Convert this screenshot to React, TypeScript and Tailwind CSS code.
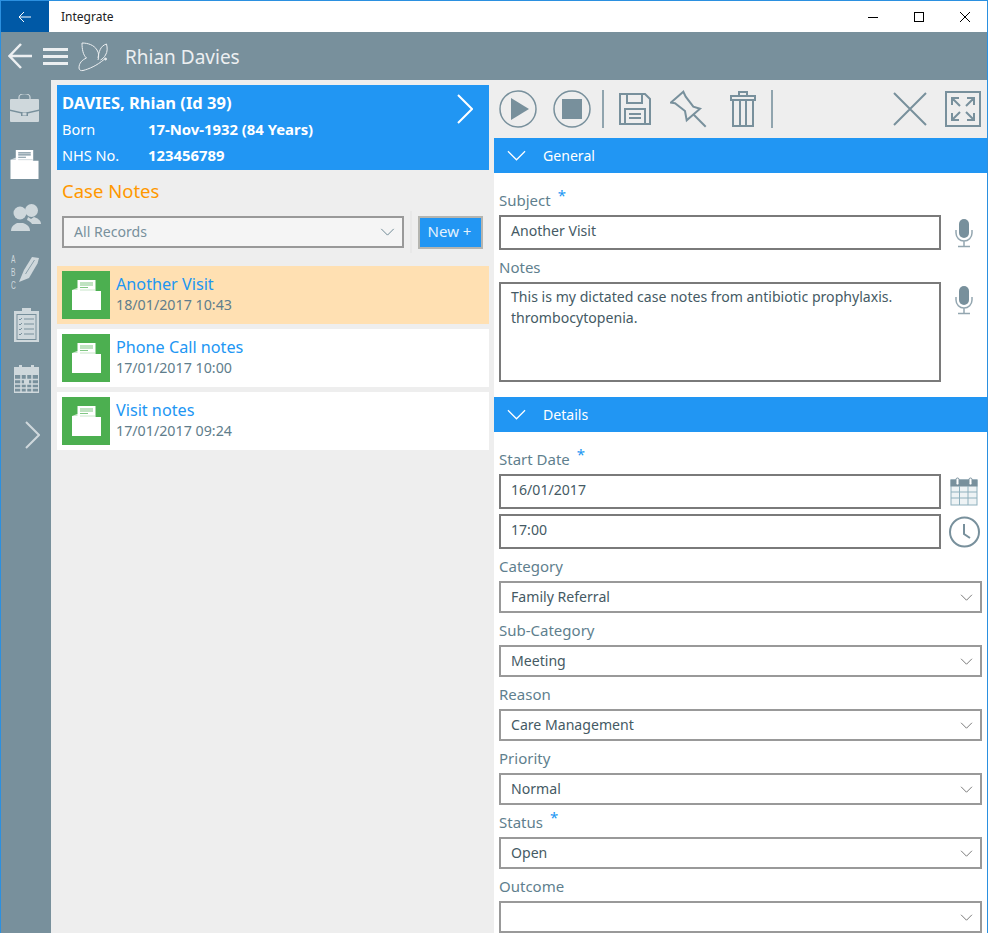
import type { ReactNode } from 'react'

const slate = '#78909c'

function Chevron({ className = '' }: { className?: string }) {
  return (
    <svg viewBox="0 0 16 9" className={className} fill="none" stroke="currentColor" strokeWidth="1">
      <path d="M1 1l7 7 7-7" />
    </svg>
  )
}

function FolderIcon({ className = '', lines = '#81c784', back = '#c8e6c9' }: { className?: string; lines?: string; back?: string }) {
  return (
    <svg viewBox="0 0 29 30" className={className}>
      <path d="M0 10l5-2h2V6h3v4z" fill={back} />
      <rect x="5.500" y="0" width="18" height="11" fill="#fff" />
      <path d="M8 3h13M8 5h13M8 7.500h8" stroke={lines} strokeWidth="1.200" />
      <path d="M0 10h8l2-1.500h13V11h6v19H0z" fill="#fff" />
      <path d="M8 10h15" stroke={back} strokeWidth="1" />
    </svg>
  )
}

function Mic() {
  return (
    <svg viewBox="0 0 18 30" className="h-[30px] w-[18px]" fill="none">
      <rect x="4" y="1" width="10" height="19" rx="5" fill={slate} />
      <path d="M1 12v3a8 8 0 0 0 16 0v-3M9 23v5M3 28.500h12" stroke={slate} strokeWidth="1.500" opacity="0.8" />
    </svg>
  )
}

function Label({ children, required }: { children: ReactNode; required?: boolean }) {
  return (
    <div className="flex h-[32px] items-end pb-[5px] text-[15px] leading-5 text-[#5f7f8e]">
      {children}
      {required && <span className="mb-[7px] ml-[7px] text-[15px] leading-none text-[#2196f3]">*</span>}
    </div>
  )
}

function TextBox({ value, className = 'pt-[4px] leading-[19px]' }: { value: string; className?: string }) {
  return (
    <div className={`w-[442px] border-2 border-[#7a7a7a] bg-white px-[10px] text-[14.100px] text-[#455a64] ${className}`}>
      {value}
    </div>
  )
}

function Select({ label, value, required }: { label: string; value: string; required?: boolean }) {
  return (
    <div>
      <Label required={required}>{label}</Label>
      <div className="flex h-[32px] items-center justify-between border-2 border-[#999] bg-white pr-[7px] pl-[10px] text-[14.100px] text-[#455a64]">
        <span>{value}</span>
        <Chevron className="h-[7px] w-[13px] text-[#555]" />
      </div>
    </div>
  )
}

function SectionHeader({ title }: { title: string }) {
  return (
    <div className="flex h-[35px] items-center bg-[#2196f3] pl-[12px] text-[14.100px] text-white">
      <Chevron className="h-[11px] w-[21px]" />
      <span className="ml-[16px]">{title}</span>
    </div>
  )
}

function NoteRow({ title, date, active }: { title: string; date: string; active?: boolean }) {
  return (
    <div className={`flex h-[58px] items-center pl-[5px] ${active ? 'bg-[#ffe0b2]' : 'bg-white'}`}>
      <div className="flex h-[48px] w-[48px] items-center justify-center bg-[#4caf50]">
        <FolderIcon className="h-[30px] w-[29px]" />
      </div>
      <div className="mb-[2px] ml-[6px]">
        <div className="text-[16.200px] leading-[21px] text-[#2196f3]">{title}</div>
        <div className="text-[14.250px] leading-[20px] text-[#607d8b]">{date}</div>
      </div>
    </div>
  )
}

function Sidebar() {
  const c = '#cfd8dc'
  const letter = { fontSize: 11, fontFamily: 'Liberation Sans, sans-serif', fill: c }
  return (
    <div className="flex w-[50px] shrink-0 flex-col items-start bg-[#78909c] pt-[14px] pl-[9px]">
      <svg viewBox="0 0 29 28" className="h-[28px] w-[29px]">
        <path d="M9 5V3a5 3 0 0 1 11 0v2" fill="none" stroke={c} strokeWidth="1.200" />
        <path d="M1 5h27a1 1 0 0 1 1 1v9.500l-11 2.500h-7L0 15.500V6a1 1 0 0 1 1-1zM0 17l11 2.500V22h7v-2.500L29 17v10a1 1 0 0 1-1 1H1a1 1 0 0 1-1-1z" fill={c} />
        <rect x="12.500" y="18.500" width="4" height="3" fill={c} />
      </svg>
      <FolderIcon className="mt-[28px] h-[29px] w-[29px]" lines={slate} back={c} />
      <svg viewBox="0 0 30 27" className="mt-[25px] ml-[1px] h-[27px] w-[30px]" fill={c}>
        <circle cx="9" cy="9" r="6.500" />
        <path d="M0 27c0-5 4-7 6-8h6c3 1 7 3 7 8z" />
        <circle cx="20.500" cy="6.500" r="6.500" />
        <path d="M17 13l3 2 3-2c3 1 7 3 7 7h-9c-1-2-3-3-5-4z" />
      </svg>
      <svg viewBox="0 0 30 39" className="mt-[22px] ml-[1px] h-[39px] w-[30px]">
        <text transform="translate(0 10) scale(0.6 1)" {...letter}>A</text>
        <text transform="translate(0 23) scale(0.6 1)" {...letter}>B</text>
        <text transform="translate(0 36) scale(0.6 1)" {...letter}>C</text>
        <path d="M21 4l7 1-1.500 5.500L18 25 8 29l5-12z" fill={c} />
        <path d="M23.500 7l-9 14" stroke={slate} strokeWidth="0.800" />
      </svg>
      <svg viewBox="0 0 25 35" className="mt-[15px] ml-[4px] h-[35px] w-[25px]">
        <path d="M0 4h8V1h9v3h8v31H0z" fill={c} />
        <rect x="2.500" y="7" width="20" height="26" fill={slate} />
        <rect x="3.500" y="8" width="18" height="24" fill={c} />
        <path d="M10 12h10M10 17h10M10 22h10M10 27h10M5 12l1 1 2-2M5 17l1 1 2-2M5 22l1 1 2-2M5 27l1 1 2-2" stroke={slate} strokeWidth="1" fill="none" />
      </svg>
      <svg viewBox="0 0 25 29" className="mt-[22px] ml-[4px] h-[29px] w-[25px]">
        <rect x="0" y="3" width="25" height="26" fill={c} />
        <path d="M1 11h23v16.500H1z" fill={slate} />
        <path d="M1 15.500h23M1 20h23M1 24h23M7 11v17M12.500 11v17M18 11v17" stroke={c} strokeWidth="1.500" />
        <path d="M6.500 1v6M18.500 1v6" stroke={c} strokeWidth="3" />
        <rect x="10" y="16" width="5" height="4" fill={c} />
      </svg>
      <svg viewBox="0 0 15 28" className="mt-[28px] ml-[15px] h-[28px] w-[15px]" fill="none" stroke={c} strokeWidth="2">
        <path d="M1 1l13 13L1 27" />
      </svg>
    </div>
  )
}

function LeftPanel() {
  return (
    <div className="flex w-[443px] shrink-0 flex-col bg-[#eeeeee] pt-[5px] pr-[5px] pl-[6px]">
      <div className="relative h-[85px] bg-[#2196f3] pt-[7px] pl-[5px] text-white">
        <div className="text-[16.500px] leading-[22px] font-bold">DAVIES, Rhian (Id 39)</div>
        <div className="mt-[4px] flex text-[14.500px] leading-[22px]">
          <span className="w-[86px]">Born</span>
          <span className="text-[14.850px] font-bold">17-Nov-1932 (84 Years)</span>
        </div>
        <div className="mt-[4px] flex text-[14.500px] leading-[22px]">
          <span className="w-[86px]">NHS No.</span>
          <span className="text-[14.850px] font-bold">123456789</span>
        </div>
        <svg viewBox="0 0 16 30" className="absolute top-[9px] right-[16px] h-[30px] w-[16px]" fill="none" stroke="white" strokeWidth="2">
          <path d="M1 1l14 14L1 29" />
        </svg>
      </div>
      <div className="mt-[8px] pl-[5px] text-[18.500px] leading-[25px] text-[#ff9800]">Case Notes</div>
      <div className="mt-[8px] flex h-[42px] items-center pr-[6px] pl-[5px]">
        <div className="flex h-[32px] w-[342px] items-center justify-between border-2 border-[#999] bg-[#f5f5f5] pr-[7px] pl-[10px] text-[14.100px] text-[#78909c]">
          <span>All Records</span>
          <Chevron className="h-[8px] w-[15px] text-[#607d8b]" />
        </div>
        <div className="mr-[6px] ml-[6px] h-[42px] w-[2px] bg-[#e8e8e8]" />
        <div className="flex h-[33px] w-[65px] items-center justify-center border-[2px] border-[#b5b5b0] bg-[#2196f3] pr-[2px] pb-[2px] text-[15px] text-[#e3f2fd]">
          New +
        </div>
      </div>
      <div className="mt-[13px] flex flex-col gap-[5px]">
        <NoteRow title="Another Visit" date="18/01/2017 10:43" active />
        <NoteRow title="Phone Call notes" date="17/01/2017 10:00" />
        <NoteRow title="Visit notes" date="17/01/2017 09:24" />
      </div>
    </div>
  )
}

function Toolbar() {
  const line = { fill: 'none', stroke: slate, strokeWidth: 2 }
  return (
    <div className="flex h-[58px] items-center bg-[#eeeeee] pl-[5px]">
      <svg viewBox="0 0 38 38" className="h-[38px] w-[38px]">
        <circle cx="19" cy="19" r="18" fill="none" stroke={slate} strokeWidth="1.500" />
        <path d="M12 8l18 11-18 11z" fill={slate} />
      </svg>
      <svg viewBox="0 0 38 38" className="ml-[16px] h-[38px] w-[38px]">
        <circle cx="19" cy="19" r="18" fill="none" stroke={slate} strokeWidth="1.500" />
        <rect x="9" y="9" width="20" height="20" fill={slate} />
      </svg>
      <div className="ml-[11px] h-[38px] w-[2px] bg-[#90a4ae]" />
      <svg viewBox="0 0 32 32" className="ml-[15px] h-[32px] w-[32px]">
        <path d="M1 1h25l5 5v25H1z" {...line} />
        <path d="M8 1v9h15V1" {...line} />
        <path d="M6 31V16h20v15M10 21h12M10 25h12" {...line} />
      </svg>
      <svg viewBox="0 0 38 38" className="ml-[19px] h-[38px] w-[38px]">
        <path d="M13.300 1.700L0.700 12.700 5 13.300l10 7.700 1.700 9.300L30 18.700l-6.700-2L15.700 6.700z" {...line} />
        <path d="M23.300 24.300l12.400 12.400" {...line} />
      </svg>
      <svg viewBox="0 0 26 36" className="ml-[22px] h-[36px] w-[26px]">
        <path d="M1 5h24v4H1zM9 5V1h8v4M3 9v26h20V9M10 9v26M16 9v26" {...line} />
      </svg>
      <div className="ml-[15px] h-[38px] w-[2px] bg-[#90a4ae]" />
      <svg viewBox="0 0 34 34" className="ml-auto h-[34px] w-[34px]" fill="none" stroke={slate} strokeWidth="2">
        <path d="M1 1l32 32M33 1L1 33" />
      </svg>
      <svg viewBox="0 0 36 36" className="mr-[6px] ml-[18px] h-[36px] w-[36px]" fill="none" stroke={slate} strokeWidth="2">
        <rect x="1" y="1" width="34" height="34" />
        <path d="M7 14V7h7M7 7l8 8M29 14V7h-7M29 7l-8 8M7 22v7h7M7 29l8-8M29 22v7h-7M29 29l-8-8" />
      </svg>
    </div>
  )
}

function RightPanel() {
  return (
    <div className="flex min-w-0 flex-1 flex-col overflow-hidden bg-white">
      <Toolbar />
      <SectionHeader title="General" />
      <div className="h-[224px] pr-[5px] pl-[5px]">
        <div className="pt-[10px]">
          <Label required>Subject</Label>
        </div>
        <div className="flex items-center">
          <TextBox value="Another Visit" className="h-[35px] pt-[4px] leading-[19px]" />
          <div className="ml-[14px]"><Mic /></div>
        </div>
        <Label>Notes</Label>
        <div className="flex items-start">
          <TextBox
            value="This is my dictated case notes from antibiotic prophylaxis. thrombocytopenia."
            className="h-[100px] pt-[2px] leading-[21px]"
          />
          <div className="mt-[3px] ml-[14px]"><Mic /></div>
        </div>
      </div>
      <SectionHeader title="Details" />
      <div className="pr-[5px] pl-[5px]">
        <div className="pt-[10px]">
          <Label required>Start Date</Label>
        </div>
        <div className="flex items-center">
          <TextBox value="16/01/2017" className="h-[35px] pt-[4px] leading-[19px]" />
          <svg viewBox="0 0 28 29" className="ml-[9px] h-[29px] w-[28px]" fill="none" stroke="#8fb0bd" strokeWidth="1">
            <rect x="1" y="3" width="26" height="25" fill="#eef3f5" />
            <rect x="1" y="3" width="26" height="6" fill={slate} stroke={slate} />
            <path d="M1 15h26M1 21h26M9.500 9v19M18 9v19" />
            <rect x="6" y="1" width="3" height="7" rx="1.500" fill="#fff" stroke={slate} />
            <rect x="19" y="1" width="3" height="7" rx="1.500" fill="#fff" stroke={slate} />
          </svg>
        </div>
        <div className="mt-[5px] flex items-center">
          <TextBox value="17:00" className="h-[35px] pt-[4px] leading-[19px]" />
          <svg viewBox="0 0 31 32" className="ml-[8px] h-[32px] w-[31px]" fill="none" stroke={slate} strokeWidth="2">
            <circle cx="15.500" cy="16" r="14.500" />
            <path d="M15 8v10l6 4" />
          </svg>
        </div>
        <Select label="Category" value="Family Referral" />
        <Select label="Sub-Category" value="Meeting" />
        <Select label="Reason" value="Care Management" />
        <Select label="Priority" value="Normal" />
        <Select label="Status" value="Open" required />
        <Select label="Outcome" value="" />
      </div>
    </div>
  )
}

export default function App() {
  return (
    <div className="flex h-[933px] w-[988px] flex-col overflow-hidden border-x border-t border-[#2b90e0] font-['Noto_Sans',sans-serif]">
      <div className="flex h-[31px] shrink-0 items-center bg-white">
        <div className="flex h-full w-[48px] items-center justify-center bg-[#0059a6] text-white">
          <svg viewBox="0 0 14 12" className="h-[12px] w-[14px]" fill="none" stroke="currentColor" strokeWidth="1">
            <path d="M13 6H1M6 1L1 6l5 5" />
          </svg>
        </div>
        <span className="ml-[12px] text-[12px] text-[#222]">Integrate</span>
        <div className="ml-auto flex h-full items-center pr-[17px] text-black">
          <svg viewBox="0 0 10 10" className="h-[10px] w-[10px]" fill="none" stroke="currentColor" strokeWidth="1">
            <path d="M0 5.500h10" />
          </svg>
          <svg viewBox="0 0 10 10" className="ml-[36px] h-[10px] w-[10px]" fill="none" stroke="currentColor" strokeWidth="1">
            <rect x="0.500" y="0.500" width="9" height="9" />
          </svg>
          <svg viewBox="0 0 10 10" className="ml-[36px] h-[10px] w-[10px]" fill="none" stroke="currentColor" strokeWidth="1">
            <path d="M0 0l10 10M10 0L0 10" />
          </svg>
        </div>
      </div>
      <div className="flex h-[48px] shrink-0 items-center bg-[#78909c] pl-[7px] text-white">
        <svg viewBox="0 0 24 26" className="h-[26px] w-[24px]" fill="none" stroke="#eceff1" strokeWidth="2.500">
          <path d="M24 13H2M13 1L1.500 13 13 25" />
        </svg>
        <svg viewBox="0 0 25 17" className="ml-[11px] h-[17px] w-[25px]" stroke="#eceff1" strokeWidth="3">
          <path d="M0 1.500h25M0 8.500h25M0 15.500h25" />
        </svg>
        <svg viewBox="0 0 40 38" className="mt-[2px] ml-[6px] h-[38px] w-[40px]" fill="none" stroke="#eceff1" strokeWidth="1">
          <path d="M8 5c6 0 12 2 15 7 2 3 2 7 1 10M8 5c0 6 1 12 4.500 15" />
          <path d="M12.500 20C8 22 5 25 5 30c0 2 2 3 4 2.500 6-1.500 14-5 21-11" />
          <path d="M24 20c1-6 2-12 8.500-14 1 4 1 8-1 11-1 2-3 4-5 5" />
          <circle cx="31.500" cy="21" r="1" fill="#eceff1" />
        </svg>
        <span className="mt-[2px] ml-[11px] text-[19px] text-[#eceff1]">Rhian Davies</span>
      </div>
      <div className="flex min-h-0 flex-1">
        <Sidebar />
        <LeftPanel />
        <RightPanel />
      </div>
    </div>
  )
}
